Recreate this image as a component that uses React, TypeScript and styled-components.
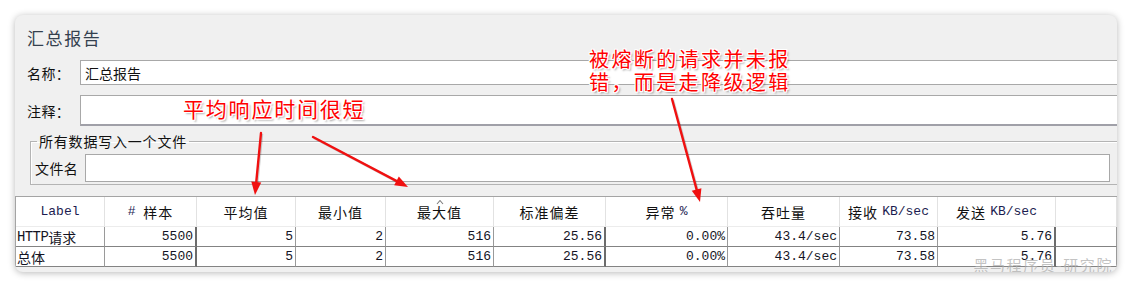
import React from 'react';
import styled, { createGlobalStyle } from 'styled-components';

const GlobalStyle = createGlobalStyle`
  html, body {
    margin: 0;
    padding: 0;
    background: #ffffff;
  }
  body {
    font-family: "Noto Sans CJK SC", "Liberation Sans", sans-serif;
  }
`;

const UI_FONT = `"Noto Sans CJK SC", "Liberation Sans", sans-serif`;
const MONO_FONT = `"Liberation Mono", "Noto Sans CJK SC", monospace`;

const Page = styled.div`
  position: relative;
  width: 1132px;
  height: 290px;
  overflow: hidden;
  padding: 15px 0 0 15px;
  box-sizing: border-box;
`;

const Window = styled.div`
  position: relative;
  width: 1102px;
  height: 257px;
  background: #f0f0f0;
  border-radius: 8px;
  box-shadow: 0 1px 7px rgba(0, 0, 0, 0.28);
  overflow: hidden;
  display: flex;
  flex-direction: column;
  font-family: ${UI_FONT};
`;

const Title = styled.div`
  padding: 14px 0 13px 12px;
  font-size: 17px;
  line-height: 18px;
  letter-spacing: 1.6px;
  color: #34404e;
`;

const FieldRow = styled.div<{ $gap?: number }>`
  display: flex;
  align-items: center;
  padding-left: 12px;
  margin-top: ${p => p.$gap ?? 0}px;
`;

const FieldLabel = styled.label<{ $width: number }>`
  width: ${p => p.$width}px;
  flex: none;
  font-size: 14px;
  color: #111;
  letter-spacing: 0.4px;
`;

const TextBox = styled.input<{ $height: number; $thick?: boolean }>`
  flex: 1;
  min-width: 0;
  height: ${p => p.$height}px;
  box-sizing: border-box;
  margin: 0 -4px 0 0;
  padding: 0 4px;
  border: 1px solid #a8a8a8;
  border-bottom: ${p => (p.$thick ? '2px solid #a0a0a8' : '1px solid #a8a8a8')};
  background: #fff;
  font-family: ${UI_FONT};
  font-size: 14px;
  color: #111;
  outline: none;
`;

const Group = styled.fieldset`
  margin: 7px -1px 0 15px;
  padding: 5px 7px 2px 4px;
  border: 1px solid #b4b4b4;
  box-shadow: inset 1px 1px 0 #ffffff;
  min-width: 0;
`;

const GroupTitle = styled.legend`
  margin-left: 2px;
  padding: 0 2px;
  font-size: 14px;
  line-height: 16px;
  letter-spacing: 0.8px;
  color: #111;
`;

const GroupRow = styled.div`
  display: flex;
  align-items: center;
`;

const FileBox = styled(TextBox)`
  margin: 0;
  border: 1px solid #a8a8a8;
`;

const Table = styled.div`
  margin-top: 11px;
  display: grid;
  grid-template-columns: 89px 92px 99px 90px 108px 112px 122px 112px 98px 118px 1fr;
  border-top: 1px solid #a4a4a4;
  border-left: 1px solid #a4a4a4;
`;

const HeadCell = styled.div<{ $mono?: boolean }>`
  position: relative;
  height: 30px;
  box-sizing: border-box;
  display: flex;
  align-items: center;
  justify-content: center;
  background: #ffffff;
  border-right: 1px solid #e2e2e2;
  border-bottom: 1px solid #ececec;
  font-family: ${p => (p.$mono ? MONO_FONT : UI_FONT)};
  font-size: 14px;
  letter-spacing: 1px;
  color: #111;
  white-space: pre;
`;

const Latin = styled.span`
  font-family: ${MONO_FONT};
  font-size: 13px;
  letter-spacing: 0;
  color: #1c1c50;
`;

const SortMark = styled.svg`
  position: absolute;
  top: 2px;
  left: 50px;
`;

const Cell = styled.div<{ $thick?: boolean; $left?: boolean }>`
  height: 20px;
  box-sizing: border-box;
  display: flex;
  align-items: center;
  justify-content: ${p => (p.$left ? 'flex-start' : 'flex-end')};
  padding: ${p => (p.$left ? '0 0 0 1px' : '0 2px 0 0')};
  background: #ffffff;
  border-right: ${p => (p.$thick ? '2px solid #6c6c6c' : '1px solid #9a9a9a')};
  border-bottom: 1px solid #838383;
  font-family: ${MONO_FONT};
  font-size: 13px;
  color: #141424;
  white-space: pre;
`;

const RowName = styled.span`
  font-family: ${MONO_FONT};
  font-size: 14px;
  letter-spacing: -0.6px;
`;

const RowNameCjk = styled.span`
  font-family: ${UI_FONT};
  font-size: 14px;
`;

const Watermark = styled.div`
  position: absolute;
  right: 4px;
  bottom: -3px;
  font-family: ${UI_FONT};
  font-size: 15px;
  letter-spacing: 1.6px;
  color: rgba(175, 175, 175, 0.75);
  pointer-events: none;
`;

const Note = styled.div<{ $x: number; $y: number; $size: number; $spacing: number }>`
  position: absolute;
  left: ${p => p.$x}px;
  top: ${p => p.$y}px;
  font-family: ${UI_FONT};
  font-size: ${p => p.$size}px;
  letter-spacing: ${p => p.$spacing}px;
  line-height: 23px;
  color: #ff0000;
  white-space: pre;
  text-shadow:
    -1px -1px 0 #fff, 1px -1px 0 #fff, -1px 1px 0 #fff, 1px 1px 0 #fff,
    0 -1px 0 #fff, 0 1px 0 #fff, -1px 0 0 #fff, 1px 0 0 #fff,
    2px 2px 2px rgba(0, 0, 0, 0.35);
`;

const Overlay = styled.svg`
  position: absolute;
  left: 0;
  top: 0;
  pointer-events: none;
`;

type Arrow = [number, number, number, number];

const arrows: Arrow[] = [
  [261, 133, 255, 195],
  [313, 137, 408, 187],
  [672, 99, 700, 202],
];

const headPoints = ([x1, y1, x2, y2]: Arrow) => {
  const a = Math.atan2(y2 - y1, x2 - x1);
  const len = 13;
  const half = 5;
  const bx = x2 - len * Math.cos(a);
  const by = y2 - len * Math.sin(a);
  const px = -Math.sin(a) * half;
  const py = Math.cos(a) * half;
  return `${x2},${y2} ${bx + px},${by + py} ${bx - px},${by - py}`;
};

const stemEnd = ([x1, y1, x2, y2]: Arrow) => {
  const a = Math.atan2(y2 - y1, x2 - x1);
  return [x2 - 10 * Math.cos(a), y2 - 10 * Math.sin(a)];
};

const columns: { key: string; node: React.ReactNode; mono?: boolean }[] = [
  { key: 'label', node: <Latin>Label</Latin> },
  { key: 'count', node: <><Latin># </Latin>样本</> },
  { key: 'avg', node: '平均值' },
  { key: 'min', node: '最小值' },
  { key: 'max', node: '最大值' },
  { key: 'std', node: '标准偏差' },
  { key: 'err', node: <>异常 <Latin>%</Latin></> },
  { key: 'tp', node: '吞吐量' },
  { key: 'recv', node: <>接收 <Latin>KB/sec</Latin></> },
  { key: 'sent', node: <>发送 <Latin>KB/sec</Latin></> },
  { key: 'blank', node: '' },
];

const rows = [
  { name: 'HTTP', cjk: '请求', values: ['5500', '5', '2', '516', '25.56', '0.00%', '43.4/sec', '73.58', '5.76'] },
  { name: '', cjk: '总体', values: ['5500', '5', '2', '516', '25.56', '0.00%', '43.4/sec', '73.58', '5.76'] },
];

const thickAfter = new Set([0, 4, 8]);

export default function App() {
  return (
    <Page>
      <GlobalStyle />
      <Window>
        <Title>汇总报告</Title>
        <FieldRow>
          <FieldLabel $width={53}>名称：</FieldLabel>
          <TextBox $height={25} readOnly value="汇总报告" />
        </FieldRow>
        <FieldRow $gap={10}>
          <FieldLabel $width={53}>注释：</FieldLabel>
          <TextBox $height={31} $thick readOnly value="" />
        </FieldRow>
        <Group>
          <GroupTitle>所有数据写入一个文件</GroupTitle>
          <GroupRow>
            <FieldLabel $width={50}>文件名</FieldLabel>
            <FileBox $height={28} readOnly value="" />
          </GroupRow>
        </Group>
        <Table>
          {columns.map(c => (
            <HeadCell key={c.key}>
              {c.key === 'max' && (
                <SortMark width="8" height="6" viewBox="0 0 8 6">
                  <path d="M1 5 L4 1.5 L7 5" fill="none" stroke="#7a7a7a" strokeWidth="1.1" />
                </SortMark>
              )}
              {c.node}
            </HeadCell>
          ))}
          {rows.map(r => (
            <React.Fragment key={r.cjk}>
              <Cell $left>
                {r.name && <RowName>{r.name}</RowName>}
                <RowNameCjk>{r.cjk}</RowNameCjk>
              </Cell>
              {r.values.map((v, i) => (
                <Cell key={i} $thick={thickAfter.has(i)}>{v}</Cell>
              ))}
              <Cell />
            </React.Fragment>
          ))}
        </Table>
        <Watermark>黑马程序员-研究院</Watermark>
      </Window>

      <Note $x={183} $y={97} $size={21} $spacing={1.8}>平均响应时间很短</Note>
      <Note $x={589} $y={47} $size={20} $spacing={2.4}>{'被熔断的请求并未报\n错，而是走降级逻辑'}</Note>

      <Overlay width="1132" height="290" viewBox="0 0 1132 290">
        {arrows.map((a, i) => {
          const [ex, ey] = stemEnd(a);
          return (
            <g key={i}>
              <line x1={a[0] + 1} y1={a[1] + 1} x2={ex + 1} y2={ey + 1} stroke="rgba(0,0,0,0.18)" strokeWidth="2.5" />
              <line x1={a[0]} y1={a[1]} x2={ex} y2={ey} stroke="#f01010" strokeWidth="2.4" strokeLinecap="round" />
              <polygon points={headPoints(a)} fill="#f01010" />
            </g>
          );
        })}
      </Overlay>
    </Page>
  );
}
